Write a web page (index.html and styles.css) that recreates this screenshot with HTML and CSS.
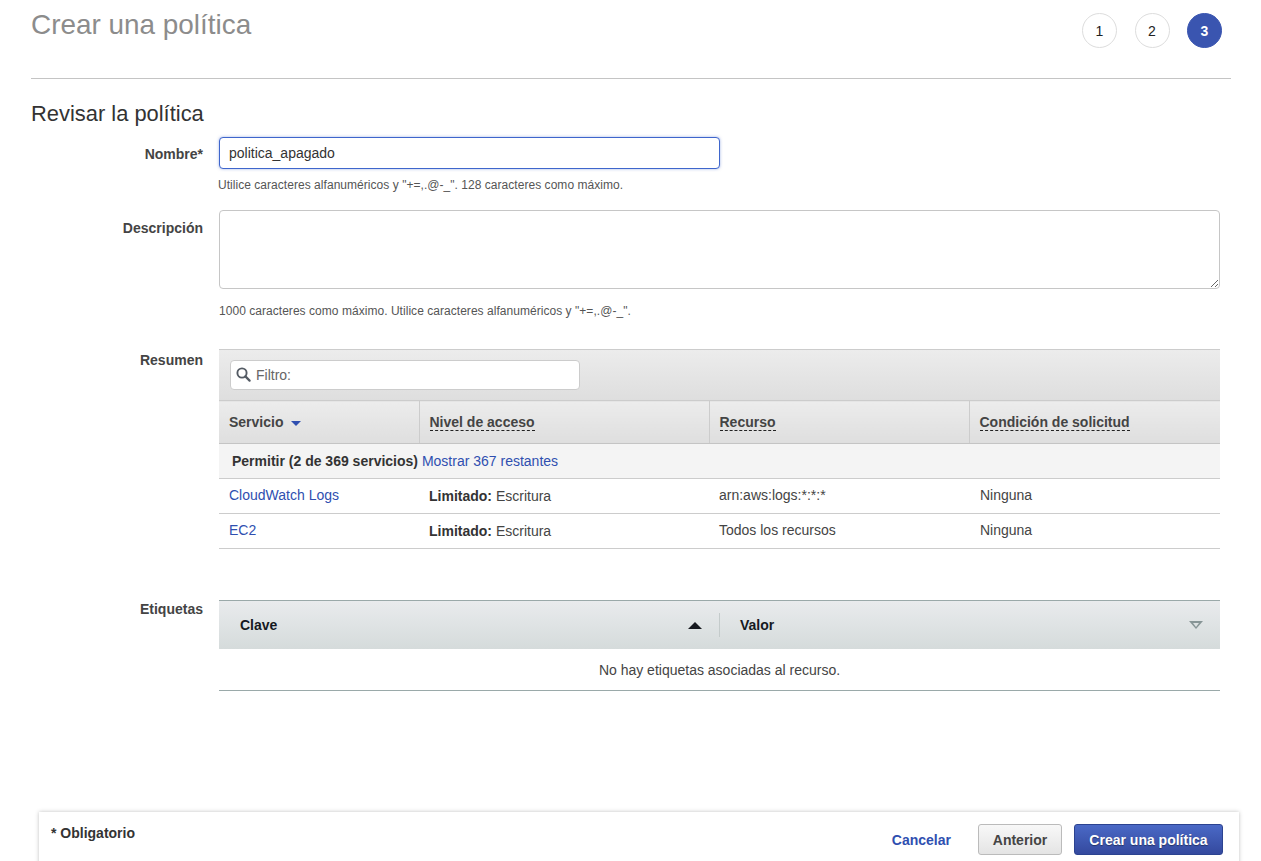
FILE: index.html
```html
<!DOCTYPE html>
<html lang="es">
<head>
  <meta charset="UTF-8">
  <meta name="viewport" content="width=device-width, initial-scale=1.0">
  <title>Crear una política</title>
  <link rel="stylesheet" href="styles.css">
</head>
<body>
  <div class="page">
    <div class="page-head">
      <h1>Crear una política</h1>
      <div class="steps">
        <span class="step">1</span>
        <span class="step">2</span>
        <span class="step step-active">3</span>
      </div>
    </div>

    <h2>Revisar la política</h2>

    <div class="form-row row-name">
      <label class="form-label" for="input-name">Nombre*</label>
      <div class="form-control">
        <input type="text" id="input-name" class="name-input" value="politica_apagado">
        <p class="hint">Utilice caracteres alfanuméricos y "+=,.@-_". 128 caracteres como máximo.</p>
      </div>
    </div>

    <div class="form-row row-desc">
      <label class="form-label" for="input-desc">Descripción</label>
      <div class="form-control">
        <textarea id="input-desc" class="desc-input"></textarea>
        <p class="hint">1000 caracteres como máximo. Utilice caracteres alfanuméricos y "+=,.@-_".</p>
      </div>
    </div>

    <div class="form-row row-summary">
      <div class="form-label">Resumen</div>
      <div class="form-control">
        <div class="summary-toolbar">
          <div class="filter-box">
            <svg class="filter-icon" width="15" height="15" viewBox="0 0 15 15">
              <circle cx="6" cy="6" r="4.6" fill="none" stroke="#545b64" stroke-width="1.9"/>
              <path d="M9.4 9.4L13.6 13.6" stroke="#545b64" stroke-width="2.2" stroke-linecap="round"/>
            </svg>
            <input type="text" class="filter-input" placeholder="Filtro:">
          </div>
        </div>
        <table class="summary-table">
          <colgroup>
            <col class="col-service">
            <col class="col-access">
            <col class="col-resource">
            <col class="col-condition">
          </colgroup>
          <thead>
            <tr>
              <th>Servicio <span class="sort-down"></span></th>
              <th><span class="dashed">Nivel de acceso</span></th>
              <th><span class="dashed">Recurso</span></th>
              <th><span class="dashed">Condición de solicitud</span></th>
            </tr>
          </thead>
          <tbody>
            <tr class="group-row">
              <td colspan="4"><b>Permitir (2 de 369 servicios)</b> <a href="#">Mostrar 367 restantes</a></td>
            </tr>
            <tr>
              <td><a href="#">CloudWatch Logs</a></td>
              <td class="access-cell"><b>Limitado:</b> Escritura</td>
              <td>arn:aws:logs:*:*:*</td>
              <td>Ninguna</td>
            </tr>
            <tr>
              <td><a href="#">EC2</a></td>
              <td class="access-cell"><b>Limitado:</b> Escritura</td>
              <td>Todos los recursos</td>
              <td>Ninguna</td>
            </tr>
          </tbody>
        </table>
      </div>
    </div>

    <div class="form-row row-tags">
      <div class="form-label">Etiquetas</div>
      <div class="form-control">
        <div class="tags-head">
          <div class="tags-col tags-key">
            <span>Clave</span>
            <span class="tri-up"></span>
          </div>
          <div class="tags-col tags-value">
            <span>Valor</span>
            <span class="tri-down"></span>
          </div>
        </div>
        <div class="tags-empty">No hay etiquetas asociadas al recurso.</div>
      </div>
    </div>
  </div>

  <div class="footer">
    <span class="required-note">* Obligatorio</span>
    <div class="footer-actions">
      <a href="#" class="cancel-link">Cancelar</a>
      <button class="btn btn-back">Anterior</button>
      <button class="btn btn-primary">Crear una política</button>
    </div>
  </div>
</body>
</html>
```

FILE: styles.css
```css
html, body {
  height: 861px;
  overflow: hidden;
}
body {
  margin: 0;
  font-family: "Liberation Sans", Arial, sans-serif;
  font-size: 14px;
  color: #444;
  background-color: #fff;
}
a {
  color: #2f4fb0;
  text-decoration: none;
}
.page {
  height: 812px;
  padding: 0 30px 0 31px;
}
.page-head {
  display: flex;
  justify-content: space-between;
  height: 78px;
  border-bottom: 1px solid #c4c4c4;
}
h1 {
  margin: 8px 0 0;
  font-size: 27.9px;
  line-height: 34px;
  font-weight: 400;
  color: #8c8c8c;
}
.steps {
  display: flex;
  gap: 17.5px;
  margin: 13px 9px 0 0;
}
.step {
  width: 33px;
  height: 33px;
  border: 1px solid #ddd;
  border-radius: 50%;
  display: flex;
  align-items: center;
  justify-content: center;
  color: #222;
}
.step-active {
  background-color: #3a55b0;
  border-color: #3a55b0;
  color: #fff;
  font-weight: 700;
}
h2 {
  margin: 22px 0 0;
  font-size: 21.9px;
  line-height: 26px;
  font-weight: 400;
  color: #333;
}
.form-row {
  display: flex;
}
.form-label {
  width: 172px;
  flex-shrink: 0;
  text-align: right;
  font-weight: 700;
  color: #444;
}
.form-control {
  width: 1001px;
  margin-left: 16px;
}
.hint {
  margin: 0;
  font-size: 12px;
  line-height: 15px;
  letter-spacing: 0.04px;
  color: #555;
}
.row-name {
  margin-top: 10px;
}
.row-name .form-label {
  padding-top: 9px;
}
.name-input {
  display: block;
  box-sizing: border-box;
  width: 501px;
  height: 32px;
  padding: 0 9px;
  border: 1px solid #3f66cc;
  border-radius: 4px;
  box-shadow: 0 0 3px rgba(63, 102, 204, 0.5);
  font-family: inherit;
  font-size: 14px;
  color: #333;
  outline: none;
}
.row-name .hint {
  margin: 9px 0 0 -1px;
}
.row-desc {
  margin-top: 17px;
}
.row-desc .form-label {
  padding-top: 10px;
}
.desc-input {
  display: block;
  box-sizing: border-box;
  width: 1001px;
  height: 79px;
  border: 1px solid #c6c6c6;
  border-radius: 4px;
}
.row-desc .hint {
  margin-top: 15px;
}
.row-summary {
  margin-top: 30px;
}
.row-summary .form-label {
  padding-top: 3px;
}
.summary-toolbar {
  height: 40px;
  padding: 10px 0 0 11px;
  border-top: 1px solid #ccc;
  background: linear-gradient(#ececec, #dedede);
}
.filter-box {
  position: relative;
  width: 350px;
}
.filter-icon {
  position: absolute;
  left: 6px;
  top: 7px;
}
.filter-input {
  display: block;
  box-sizing: border-box;
  width: 350px;
  height: 30px;
  padding: 0 10px 0 25px;
  border: 1px solid #ccc;
  border-radius: 4px;
  font-family: inherit;
  font-size: 14px;
}
.filter-input::placeholder {
  color: #666;
}
.summary-table {
  width: 1001px;
  table-layout: fixed;
  border-collapse: collapse;
}
.col-service { width: 200px; }
.col-access { width: 290px; }
.col-resource { width: 260px; }
.summary-table th {
  height: 42px;
  padding: 0 10px;
  text-align: left;
  font-weight: 700;
  color: #444;
  background: linear-gradient(#ececec, #dedede);
  border-top: 1px solid #ccc;
  border-bottom: 1px solid #c4c4c4;
  border-left: 1px solid #ccc;
}
.summary-table th:first-child {
  border-left: none;
}
.summary-table td:last-child {
  padding-left: 11px;
}
.dashed {
  border-bottom: 1px dashed #222;
}
.sort-down {
  display: inline-block;
  margin-left: 4px;
  vertical-align: middle;
  border-left: 5px solid transparent;
  border-right: 5px solid transparent;
  border-top: 5px solid #2f4fb0;
}
.summary-table td {
  height: 32px;
  padding-top: 0;
  padding-right: 10px;
  padding-bottom: 2px;
  padding-left: 10px;
  border-bottom: 1px solid #ccc;
}
.summary-table td.access-cell {
  height: 34px;
  padding-bottom: 0;
}
.summary-table .group-row td {
  height: 34px;
  padding: 0 10px 0 13px;
  background-color: #f4f4f4;
}
.summary-table b {
  color: #333;
}
.row-tags {
  margin-top: 51px;
}
.row-tags .form-label {
  padding-top: 1px;
}
.tags-head {
  display: flex;
  align-items: center;
  height: 48px;
  border-top: 1px solid #9aa9a9;
  background: linear-gradient(#e9ebed, #d5dbdb);
  font-weight: 700;
  color: #16191f;
}
.tags-col {
  display: flex;
  align-items: center;
  justify-content: space-between;
  box-sizing: border-box;
  height: 24px;
  padding: 0 17px 0 21px;
}
.tags-key {
  width: 501px;
  border-right: 1px solid #c4cbcb;
}
.tags-value {
  flex: 1;
  padding-left: 20px;
}
.tri-up {
  border-left: 7px solid transparent;
  border-right: 7px solid transparent;
  border-bottom: 7px solid #16191f;
}
.tri-down {
  width: 14px;
  height: 8px;
  clip-path: polygon(0 0, 100% 0, 50% 100%);
  background-color: #879596;
  position: relative;
}
.tri-down::after {
  content: "";
  position: absolute;
  left: 4px;
  top: 2px;
  border-left: 3px solid transparent;
  border-right: 3px solid transparent;
  border-top: 4px solid #dde1e2;
}
.tags-empty {
  height: 41px;
  line-height: 43px;
  text-align: center;
  border-bottom: 1px solid #9aa9a9;
  color: #444;
}
.footer {
  display: flex;
  justify-content: space-between;
  box-sizing: border-box;
  width: 1200px;
  height: 60px;
  margin-left: 39px;
  padding: 12px 16px 0 12px;
  box-shadow: 0 0 4px rgba(0, 0, 0, 0.25);
}
.required-note {
  padding-top: 1px;
  font-weight: 700;
  font-size: 14px;
  color: #333;
}
.footer-actions {
  display: flex;
  align-items: flex-start;
}
.cancel-link {
  margin: 8px 27px 0 0;
  font-weight: 700;
}
.btn {
  height: 31px;
  border-radius: 3px;
  font-family: inherit;
  font-size: 14px;
  font-weight: 700;
}
.btn-back {
  width: 84px;
  margin-right: 12px;
  color: #444;
  border: 1px solid #bbb;
  background: linear-gradient(#f8f8f8, #e4e4e4);
}
.btn-primary {
  width: 149px;
  color: #fff;
  border: 1px solid #2c4390;
  background: linear-gradient(#4a69c6, #34499e);
  text-shadow: 0 1px 1px rgba(0, 0, 0, 0.4);
}
```
